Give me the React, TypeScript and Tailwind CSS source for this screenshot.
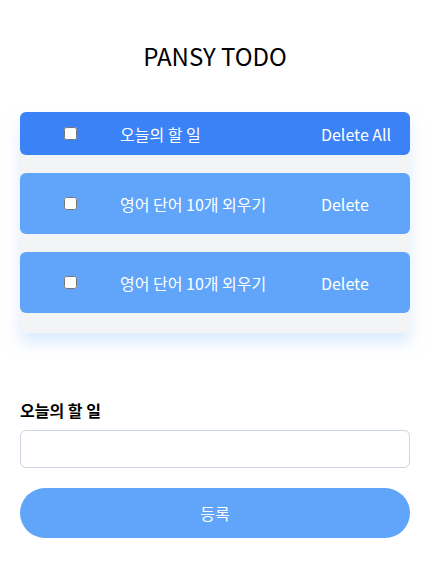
import { useState } from 'react';

interface Todo {
  id: number;
  text: string;
  done: boolean;
}

export default function App() {
  const [todos] = useState<Todo[]>([
    { id: 1, text: '영어 단어 10개 외우기', done: false },
    { id: 2, text: '영어 단어 10개 외우기', done: false },
  ]);

  return (
    <div
      className="min-h-screen bg-white px-5 pt-[40px]"
      style={{ fontFamily: '"Noto Sans CJK KR", "Noto Sans", sans-serif' }}
    >
      {/* Title */}
      <h1 className="text-center text-2xl leading-8 font-normal text-black mb-[40px]">PANSY TODO</h1>

      {/* List */}
      <div className="bg-[#f3f4f6] rounded-md pb-5 shadow-[0_10px_15px_rgba(191,219,254,0.55)]">
        <div className="flex items-center h-[43px] bg-[#3b82f6] rounded-md text-white text-base">
          <div className="w-[100px] flex justify-center">
            <input type="checkbox" className="w-[13px] h-[13px]" />
          </div>
          <div className="flex-1">오늘의 할 일</div>
          <div className="w-[89px]">Delete All</div>
        </div>

        <div className="flex flex-col gap-[18px] mt-[18px]">
          {todos.map((todo) => (
            <div
              key={todo.id}
              className="flex items-center h-[61px] bg-[#60a5fa] rounded-md text-white text-base"
            >
              <div className="w-[100px] flex justify-center">
                <input type="checkbox" defaultChecked={todo.done} className="w-[13px] h-[13px]" />
              </div>
              <div className="flex-1">{todo.text}</div>
              <div className="w-[89px]">Delete</div>
            </div>
          ))}
        </div>
      </div>

      {/* Form */}
      <div className="mt-[65px]">
        <label className="block text-base leading-6 font-bold text-black mb-[8px]">오늘의 할 일</label>
        <input className="w-full h-[38px] border border-[#cbd5e1] rounded-md px-3 outline-none" />
        <button className="w-full h-[50px] mt-[20px] bg-[#60a5fa] rounded-full text-white text-base">
          등록
        </button>
      </div>
    </div>
  );
}
